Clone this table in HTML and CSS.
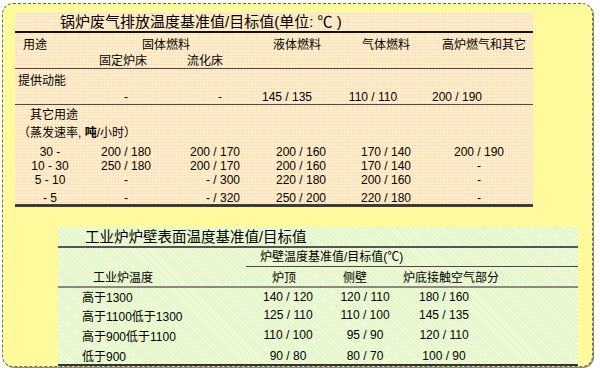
FILE: index.html
```html
<!DOCTYPE html>
<html lang="zh-CN">
<head>
<meta charset="utf-8">
<title>温度基准值</title>
<link rel="stylesheet" href="styles.css">
</head>
<body>
<div class="frame">
  <section class="t1">
    <div class="t1-title">锅炉废气排放温度基准值/目标值(单位: ℃ )</div>
    <div class="row t1-head">
      <span class="lft">用途</span>
      <span>固体燃料</span>
      <span>液体燃料</span>
      <span>气体燃料</span>
      <span class="c-last">高炉燃气和其它</span>
    </div>
    <div class="row t1-sub">
      <span></span>
      <span>固定炉床</span>
      <span>流化床</span>
      <span></span>
    </div>
    <div class="row t1-label supply">提供动能</div>
    <div class="row t1-vals">
      <span></span>
      <span>-</span>
      <span class="ra">-</span>
      <span>145 / 135</span>
      <span>110 / 110</span>
      <span>200 / 190</span>
      <span></span>
    </div>
    <div class="row t1-label other">其它用途</div>
    <div class="row t1-label rate">（蒸发速率, <b>吨</b>/小时）</div>
    <div class="row t1-data d1">
      <span>30 -</span><span>200 / 180</span><span class="ra">200 / 170</span><span>200 / 160</span><span>170 / 140</span><span class="c-last">200 / 190</span>
    </div>
    <div class="row t1-data">
      <span>10 - 30</span><span>250 / 180</span><span class="ra">200 / 170</span><span>200 / 160</span><span>170 / 140</span><span class="c-last">-</span>
    </div>
    <div class="row t1-data">
      <span>5 - 10</span><span>-</span><span class="ra">- / 300</span><span>220 / 180</span><span>200 / 160</span><span class="c-last">-</span>
    </div>
    <div class="row t1-data d4">
      <span>- 5</span><span>-</span><span class="ra">- / 320</span><span>250 / 200</span><span>220 / 180</span><span class="c-last">-</span>
    </div>
  </section>

  <section class="t2">
    <div class="t2-title">工业炉炉壁表面温度基准值/目标值</div>
    <div class="row t2-sub">
      <span></span>
      <span class="t2-group">炉壁温度基准值/目标值(℃)</span>
    </div>
    <div class="row t2-head">
      <span class="lft">工业炉温度</span>
      <span>炉顶</span>
      <span>侧壁</span>
      <span>炉底接触空气部分</span>
      <span></span>
    </div>
    <div class="row t2-data r1">
      <span class="lft">高于1300</span><span>140 / 120</span><span>120 / 110</span><span>180 / 160</span><span></span>
    </div>
    <div class="row t2-data">
      <span class="lft">高于1100低于1300</span><span>125 / 110</span><span>110 / 100</span><span>145 / 135</span><span></span>
    </div>
    <div class="row t2-data">
      <span class="lft">高于900低于1100</span><span>110 / 100</span><span>95 / 90</span><span>120 / 110</span><span></span>
    </div>
    <div class="row t2-data r4">
      <span class="lft">低于900</span><span>90 / 80</span><span>80 / 70</span><span>100 / 90</span><span></span>
    </div>
  </section>
</div>
</body>
</html>
```
FILE: styles.css
```css
* { box-sizing: border-box; }
html, body { margin: 0; padding: 0; background: #ffffff; }
body {
  font-family: "Liberation Sans", "Noto Sans CJK SC", sans-serif;
  font-size: 12px;
  color: #000;
  width: 600px;
  height: 370px;
  overflow: hidden;
}
.frame {
  margin: 3px 0 0 2px;
  width: 591px;
  height: 364px;
  background: #fffb9c;
  border: 1px dashed #6e6e5a;
  border-radius: 11px;
  box-shadow: 1px 1px 0 #8a8a70;
  padding: 8px 0 0 12px;
}
.row { display: grid; align-items: center; white-space: nowrap; }
.row > span { text-align: center; }
.row > .lft { text-align: left; }
.row > .ra { text-align: right; padding-right: 5px; }
b { font-weight: bold; }

/* ---------- table 1 ---------- */
.t1 {
  width: 518px;
  background-color: #fff2c6;
  background-image: radial-gradient(circle, #ffd6c6 0.9px, transparent 1.1px);
  background-size: 3px 3px;
  border-bottom: 3px solid #3c3c3c;
}
.t1-title {
  height: 21px;
  padding-left: 45px;
  font-size: 15px;
  line-height: 19px;
  border-bottom: 2px solid #111;
}
.t1-head { height: 20px; grid-template-columns: 72px 158px 104px 74px 110px; }
.t1-head .lft { padding-left: 8px; }
.t1-head .c-last { padding-left: 12px; }
.t1-sub {
  height: 16px;
  grid-template-columns: 72px 72px 92px 1fr;
  border-bottom: 1px solid #4a4a4a;
  align-items: end;
  line-height: 16px;
}
.t1-label { height: 20px; display: block; line-height: 20px; }
.supply { padding-left: 3px; padding-top: 2px; }
.other { padding-left: 15px; height: 19px; line-height: 19px; padding-top: 1px; }
.rate { padding-left: 3px; height: 19px; line-height: 19px; }
.t1-vals {
  height: 16px;
  grid-template-columns: 70px 82px 78px 84px 88px 80px 36px;
  border-bottom: 1px solid #4a4a4a;
}
.t1-vals .ra { padding-right: 23px; }
.t1-data { height: 14px; grid-template-columns: 70px 82px 78px 112px 58px 118px; }
.t1-data .c-last { padding-left: 10px; }
.t1-data.d1 { height: 16px; padding-top: 2px; }
.t1-data.d4 { height: 17px; padding-top: 4px; }

/* ---------- table 2 ---------- */
.t2 {
  margin: 20px 0 0 43px;
  width: 520px;
  background-color: #e4f7c8;
  background-image: repeating-linear-gradient(45deg, #f4fbe2 0 1px, transparent 1px 3px);
  border-bottom: 2px solid #333;
}
.t2-title {
  height: 21px;
  padding-left: 27px;
  font-size: 14.5px;
  line-height: 20px;
  border-bottom: 2px solid #555;
}
.t2-sub { height: 19px; grid-template-columns: 188px 1fr; }
.t2-sub .t2-group {
  text-align: left;
  padding-left: 14px;
  height: 19px;
  line-height: 18px;
  border-bottom: 1px solid #4a4a4a;
}
.t2-head {
  height: 21px;
  grid-template-columns: 188px 76px 66px 126px 64px;
  border-bottom: 2px solid #8a8a80;
}
.t2-head .lft { padding-left: 35px; }
.t2-data { height: 20px; grid-template-columns: 188px 84px 70px 88px 90px; }
.t2-data .lft { padding-left: 24px; }
.t2-data.r1 { height: 17px; }
.t2-data.r4 { height: 19px; padding-top: 2px; }
```
